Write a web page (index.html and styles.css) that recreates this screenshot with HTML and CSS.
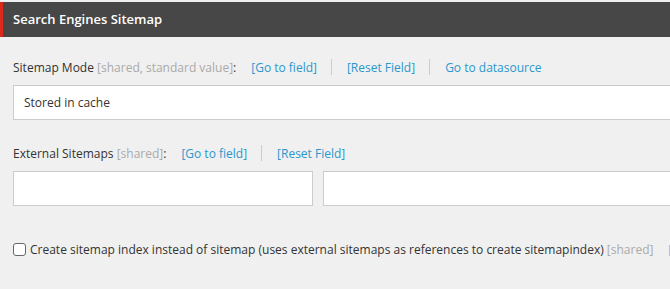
FILE: index.html
```html
<!DOCTYPE html>
<html lang="en">
<head>
    <meta charset="UTF-8">
    <title>Search Engines Sitemap</title>
    <link rel="stylesheet" href="styles.css">
</head>
<body>

    <!-- Section header -->
    <div class="section-head">Search Engines Sitemap</div>

    <div class="section-body">

        <!-- Sitemap Mode -->
        <div class="field">
            <div class="field-label">
                <span>Sitemap Mode <span class="meta">[shared, standard value]</span>:</span>
                <a href="#">[Go to field]</a>
                <span class="sep"></span>
                <a href="#">[Reset Field]</a>
                <span class="sep"></span>
                <a href="#">Go to datasource</a>
            </div>
            <div class="input wide">Stored in cache</div>
        </div>

        <!-- External Sitemaps -->
        <div class="field">
            <div class="field-label">
                <span>External Sitemaps <span class="meta">[shared]</span>:</span>
                <a href="#">[Go to field]</a>
                <span class="sep"></span>
                <a href="#">[Reset Field]</a>
            </div>
            <div class="input-pair">
                <div class="input"></div>
                <div class="input"></div>
            </div>
        </div>

        <!-- Sitemap index checkbox -->
        <div class="check-row">
            <span class="checkbox"></span>
            <span>Create sitemap index instead of sitemap (uses external sitemaps as references to create sitemapindex) <span class="meta">[shared]</span></span>
            <a href="#" class="check-link">[Go to field]</a>
        </div>

    </div>

</body>
</html>
```

FILE: styles.css
```css
/* Basic Reset */
* { margin: 0; padding: 0; box-sizing: border-box; }

body {
    font-family: "Open Sans", "Liberation Sans", sans-serif;
    font-size: 12px;
    color: #333;
    background-color: #f0f0f0;
    width: 670px;
    height: 289px;
    overflow: hidden;
    padding-top: 2px;
}

a {
    color: #2a97cd;
    text-decoration: none;
}

/* Section header */
.section-head {
    height: 35px;
    line-height: 35px;
    background-color: #474747;
    border-left: 3px solid #dc291e;
    color: #fff;
    font-weight: 600;
    font-size: 13px;
    padding-left: 10px;
}

.section-body {
    padding: 20px 0 0 13px;
    width: 800px;
}

/* Fields */
.field {
    margin-bottom: 23px;
}
.field-label {
    display: flex;
    align-items: center;
    height: 20px;
    margin-bottom: 8px;
    white-space: nowrap;
}
.field-label a {
    margin-left: 15px;
}
.field-label .sep {
    width: 1px;
    height: 16px;
    background-color: #ccc;
    margin-left: 14px;
}
.meta {
    color: #aaa;
}

.input {
    height: 35px;
    line-height: 33px;
    background-color: #fff;
    border: 1px solid #ccc;
    padding: 0 10px;
    color: #333;
}
.input.wide {
    width: 780px;
}
.input-pair {
    display: grid;
    grid-template-columns: 300px 400px;
    gap: 10px;
}

/* Checkbox row */
.check-row {
    display: flex;
    align-items: center;
    white-space: nowrap;
    margin-top: 35px;
}
.checkbox {
    width: 13px;
    height: 13px;
    border: 1px solid #666;
    border-radius: 3px;
    background-color: #fff;
    margin-right: 4px;
}
.check-link {
    margin-left: 15px;
}
```
